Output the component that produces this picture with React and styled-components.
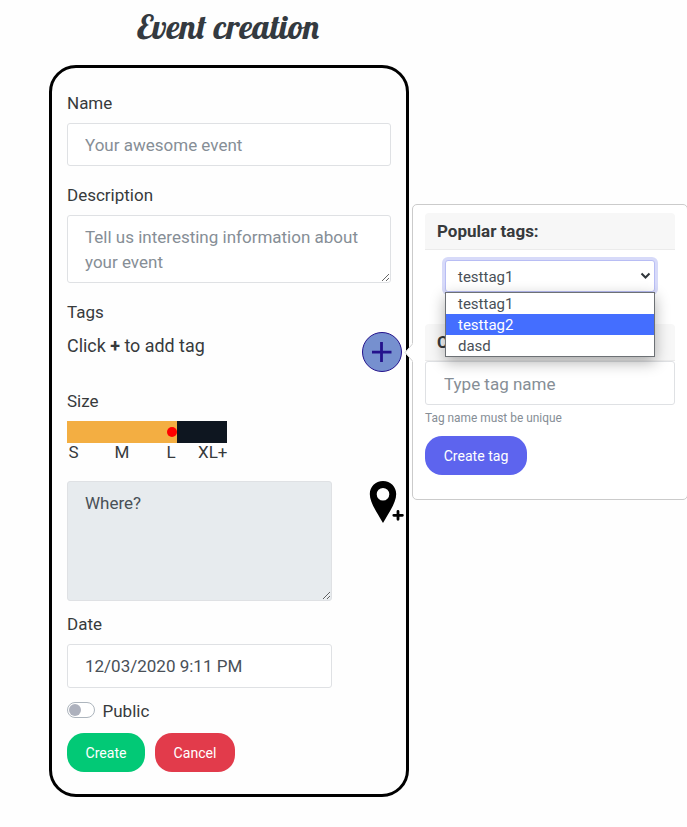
import React from 'react';
import styled, { createGlobalStyle } from 'styled-components';

const GlobalStyle = createGlobalStyle`
  *, *::before, *::after { box-sizing: border-box; }
  html, body { margin: 0; height: 827px; overflow: hidden; background: #fefefe; }
  body {
    font-family: Roboto, sans-serif;
    font-size: 17px;
    line-height: 25px;
    color: #373a3c;
  }
`;

const Page = styled.main`
  position: relative;
  width: 687px;
  height: 827px;
  overflow: hidden;
  padding-left: 49px;
`;

const Title = styled.h1`
  margin: 0;
  width: 358px;
  height: 65px;
  padding-top: 5px;
  text-align: center;
  font: 400 34px/44px Lobster, 'Liberation Serif', serif;
  color: #343a40;
  white-space: nowrap;
`;

const Card = styled.form`
  width: 360px;
  height: 732px;
  border: 3px solid #000;
  border-radius: 27px;
  padding: 23px 15px 0;
  background: #fefefe;
`;

const Field = styled.div`
  display: flex;
  flex-direction: column;
  align-items: flex-start;
  margin-bottom: ${(p) => p.$gap}px;
`;

const Label = styled.label`
  height: 25px;
  margin-bottom: 7px;
`;

const Input = styled.input`
  display: block;
  width: ${(p) => p.$width};
  height: ${(p) => p.$height}px;
  padding: ${(p) => p.$padding ?? '0 17px'};
  border: 1px solid #dfe1e4;
  border-radius: 3px;
  background: #fff;
  font: 17px/25px Roboto, sans-serif;
  color: #495057;
  outline: none;
  &::placeholder { color: #868e96; opacity: 1; }
`;

const TextArea = styled.textarea`
  display: block;
  width: ${(p) => p.$width};
  height: ${(p) => p.$height}px;
  padding: 9px 17px 8px;
  border: 1px solid #dfe1e4;
  border-radius: 3px;
  background: ${(p) => (p.readOnly ? '#e7ebee' : '#fff')};
  font: 17px/25px Roboto, sans-serif;
  color: #495057;
  outline: none;
  overflow: hidden;
  resize: both;
  &::placeholder { color: ${(p) => (p.readOnly ? '#495057' : '#868e96')}; opacity: 1; }
`;

const TagRow = styled.div`
  display: flex;
  justify-content: space-between;
  width: 335px;
  height: 40px;
  line-height: 28px;
  font-size: 17.9px;
`;

const AddTag = styled.button`
  width: 40px;
  height: 40px;
  padding: 0;
  border: 1px solid #24128c;
  border-radius: 50%;
  background: #7690cf;
  svg { display: block; margin: 9px; }
`;

const SizeBar = styled.div`
  display: flex;
  align-items: center;
  width: 160px;
  height: 22px;
  background: linear-gradient(to right, #f3ae42 110px, #0e1620 110px);
`;

const Thumb = styled.i`
  width: 10px;
  height: 10px;
  margin-left: 100px;
  border-radius: 50%;
  background: #f00;
`;

const SizeMarks = styled.div`
  display: grid;
  grid-template-columns: 46px 52px 31.5px auto;
  width: 162px;
  height: 20px;
  padding-left: 1.5px;
  line-height: 18px;
`;

const PlaceRow = styled.div`
  display: flex;
  gap: 37px;
  width: 340px;
  height: 120px;
  margin-bottom: 11px;
  svg { flex: none; }
`;

const SwitchRow = styled.div`
  display: flex;
  align-items: center;
  gap: 7.5px;
  height: 25px;
  margin-bottom: 9px;
`;

const Switch = styled.span`
  width: 28px;
  height: 16px;
  padding: 1px;
  margin-top: -3px;
  border: 1px solid #adb5bd;
  border-radius: 8px;
  background: #fff;
  &::before {
    content: '';
    display: block;
    width: 12px;
    height: 12px;
    border-radius: 50%;
    background: #adb1bd;
  }
`;

const Actions = styled.div`
  display: flex;
  gap: 10px;
`;

const Button = styled.button`
  display: block;
  width: ${(p) => p.$width}px;
  height: 39px;
  padding: 1px 0 0;
  border: 0;
  border-radius: 17px;
  background: ${(p) => p.$color};
  color: #fff;
  font: 14.1px/21px Roboto, sans-serif;
`;

/* Popover floating beside the add-tag button */
const Popover = styled.aside`
  position: absolute;
  left: 412px;
  top: 204px;
  width: 276px;
  height: 296px;
  padding: 8px 12px;
  border: 1px solid #cbcbcb;
  border-radius: 5px;
  background: #fff;
`;

const Arrow = styled.svg`
  position: absolute;
  left: -9px;
  top: 138px;
`;

const PopoverHeader = styled.h3`
  height: 37px;
  margin: 0;
  padding: 0 12px;
  border-bottom: 1px solid #ebebeb;
  border-radius: 4px 4px 0 0;
  background: #f7f7f7;
  font-size: 17px;
  line-height: 37px;
  font-weight: 700;
`;

const SelectWrap = styled.div`
  position: relative;
  width: 210px;
  height: 31px;
  margin: 10px 0 33px 20px;
`;

const SelectBox = styled.div`
  display: flex;
  align-items: center;
  justify-content: space-between;
  height: 32px;
  padding: 2px 3px 0 12px;
  border: 1px solid #b8bdf4;
  border-radius: 3px;
  box-shadow: 0 0 0 3px #d7daf9;
  background: #fff;
  font-size: 15px;
  color: #495057;
  svg { margin-top: -2px; }
`;

const Options = styled.ul`
  position: absolute;
  top: 32px;
  left: 0;
  width: 210px;
  margin: 0;
  padding: 0;
  list-style: none;
  border: 1px solid #6d7175;
  background: #fff;
  box-shadow: 0 5px 14px rgba(0, 0, 0, 0.32);
`;

const Option = styled.li`
  height: 21px;
  padding-left: 12px;
  font-size: 15px;
  line-height: 23px;
  color: ${(p) => (p.$active ? '#fff' : '#495057')};
  background: ${(p) => (p.$active ? '#446eff' : '#fff')};
`;

const Hint = styled.small`
  display: block;
  height: 31px;
  font-size: 11.9px;
  line-height: 26px;
  color: #868e96;
`;

const tags = ['testtag1', 'testtag2', 'dasd'];

export default function App() {
  return (
    <>
      <GlobalStyle />
      <Page>
        <Title>Event creation</Title>
        <Card>
          <Field $gap={17}>
            <Label>Name</Label>
            <Input $width="100%" $height={43} placeholder="Your awesome event" />
          </Field>
          <Field $gap={17}>
            <Label>Description</Label>
            <TextArea $width="100%" $height={68} placeholder="Tell us interesting information about your event" />
          </Field>
          <Field $gap={17}>
            <Label>Tags</Label>
            <TagRow>
              <span>Click <b>+</b> to add tag</span>
              <AddTag type="button" aria-label="Add tag">
                <svg width="20" height="20" viewBox="0 0 20 20" stroke="#24128c" strokeWidth="2.8">
                  <path d="M9.500 0v20M-0.500 10.200h20" />
                </svg>
              </AddTag>
            </TagRow>
          </Field>
          <Field $gap={18}>
            <Label>Size</Label>
            <SizeBar><Thumb /></SizeBar>
            <SizeMarks><span>S</span><span>M</span><span>L</span><span>XL+</span></SizeMarks>
          </Field>
          <PlaceRow>
            <TextArea $width="265px" $height={120} placeholder="Where?" readOnly />
            <svg width="36" height="44" viewBox="0 0 36 44">
              <path fillRule="evenodd" d="M14 0C6.400 0 .8 5.700 .8 13c0 8 6.200 17 13.200 29 7-12 13.200-21 13.200-29C27.200 5.700 21.600 0 14 0ZM14 7a6.300 6.300 0 1 1 0 12.600a6.300 6.300 0 0 1 0-12.600Z" />
              <path d="M29 30.300v8M24.800 34.300h8.600" stroke="#000" strokeWidth="2.800" strokeLinecap="round" />
            </svg>
          </PlaceRow>
          <Field $gap={11}>
            <Label>Date</Label>
            <Input $width="265px" $height={44} defaultValue="12/03/2020 9:11 PM" />
          </Field>
          <SwitchRow><Switch />Public</SwitchRow>
          <Actions>
            <Button type="button" $width={78} $color="#02c976">Create</Button>
            <Button type="button" $width={80} $color="#e23b4b">Cancel</Button>
          </Actions>
        </Card>
        <Popover>
          <Arrow width="9" height="19" viewBox="0 0 9 19">
            <path d="M9 0L1 9.500L9 19Z" fill="#fff" />
            <path d="M8.500 1L1 9.500L8.500 18" fill="none" stroke="#d0d0d0" />
          </Arrow>
          <PopoverHeader>Popular tags:</PopoverHeader>
          <SelectWrap>
            <SelectBox>
              testtag1
              <svg width="11" height="8" viewBox="0 0 11 8" fill="none" stroke="#30363b" strokeWidth="2">
                <path d="M1.500 1.500L5.500 5.500L9.500 1.500" />
              </svg>
            </SelectBox>
            <Options>
              {tags.map((tag) => (
                <Option key={tag} $active={tag === 'testtag2'}>{tag}</Option>
              ))}
            </Options>
          </SelectWrap>
          <PopoverHeader>Create tag:</PopoverHeader>
          <Input $width="100%" $height={44} $padding="2px 17px 0 18px" placeholder="Type tag name" />
          <Hint>Tag name must be unique</Hint>
          <Button type="button" $width={102} $color="#5d64ee">Create tag</Button>
        </Popover>
      </Page>
    </>
  );
}
